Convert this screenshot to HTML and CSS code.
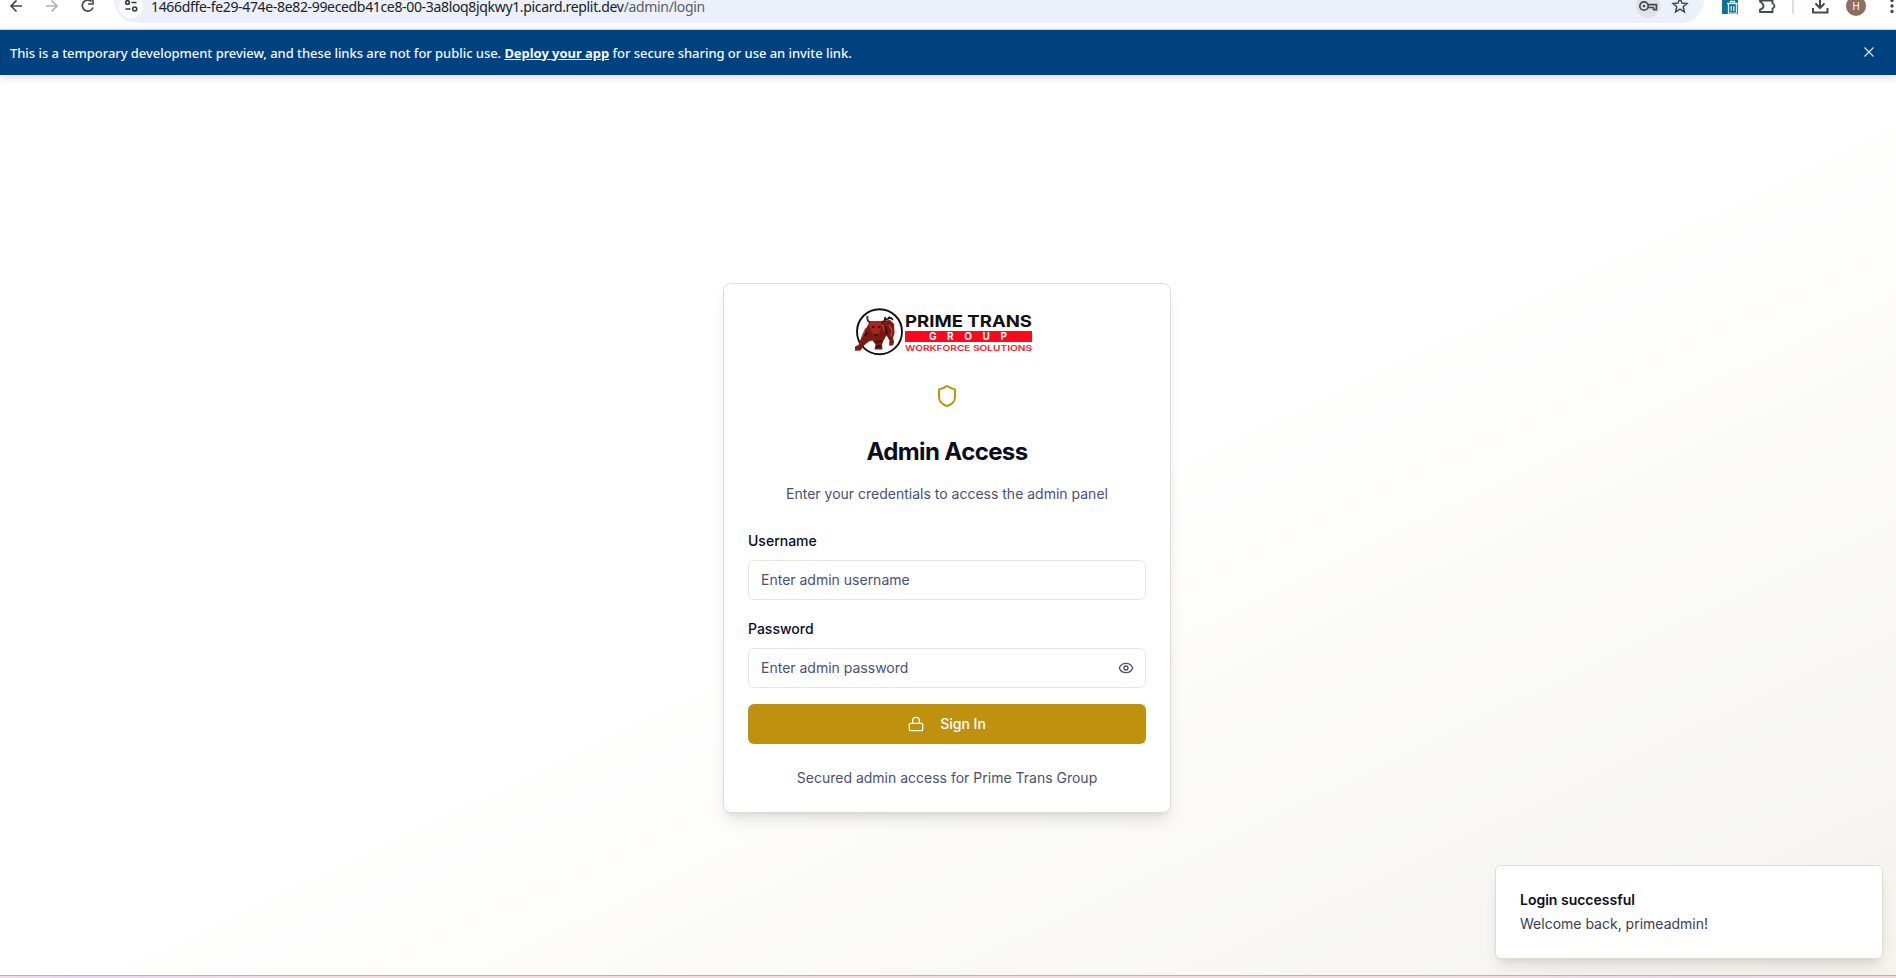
FILE: index.html
```html
<!DOCTYPE html>
<html lang="en">
<head>
<meta charset="utf-8">
<title>Admin Access</title>
<link rel="stylesheet" href="styles.css">
</head>
<body>
<header class="toolbar">
  <svg class="nav-icons" width="114" height="29" viewBox="0 0 114 29" fill="none" stroke="#46484b" stroke-width="1.7">
    <path d="M22 6H11M16.500 0.500L11 6l5.500 5.500"/>
    <path d="M46 6H57M51.500 0.500L57 6l-5.500 5.500" stroke="#aeb0b3"/>
    <path d="M91.500 1.500A5.500 5.500 0 1 0 93 7.500M93 -1v5h-5"/>
  </svg>
  <div class="address">
    <span class="site-info">
      <svg width="24" height="24" viewBox="0 0 24 24" fill="none" stroke="#333538" stroke-width="1.6"><circle cx="8.500" cy="8.500" r="1.800"/><path d="M12.500 8.500h5M6.500 15h5"/><circle cx="15.700" cy="15" r="2"/></svg>
    </span>
    <span class="url">1466dffe-fe29-474e-8e82-99ecedb41ce8-00-3a8loq8jqkwy1.picard.replit.dev<span class="url-path">/admin/login</span></span>
    <svg class="address-icons" width="68" height="23" viewBox="0 0 68 23" fill="none" stroke="#46484b" stroke-width="1.7">
      <circle cx="12" cy="6" r="12" fill="#dfe2e8" stroke="none"/>
      <circle cx="8" cy="6" r="4.200"/><circle cx="8" cy="6" r="1.300" fill="#46484b" stroke="none"/><path d="M12 4.700h8.500v5h-3V7.500H12"/>
      <path d="M44 -1.500l2 4.600 5 .4-3.800 3.300 1.200 5-4.400-2.700-4.400 2.700 1.200-5L37 3.500l5-.4z" stroke-width="1.500"/>
    </svg>
  </div>
  <svg class="ext-icons" width="180" height="29" viewBox="0 0 180 29" fill="none" stroke="#46484b" stroke-width="1.800">
    <path d="M6 0h16v14H6z" fill="#0b7391" stroke="none"/>
    <path d="M11 3.500h11M14.500 3V1.500h4V3M12.500 4v9.200h8V4M15.200 6v5M17.800 6v5" stroke="#dcebf0" stroke-width="1.300"/>
    <path d="M44 -2v3.500q3.500 2 3.500 4.500T44 9.500V12h12.500V8.500q2-.5 2-2.500t-2-2.500V0.500H44"/>
    <path d="M77 0v14" stroke="#cfdffa" stroke-width="2"/>
    <path d="M104 -2v9M99.500 3.500l4.500 4.500 4.500-4.500M97 8v4.500h14.500V8" stroke-width="2"/>
    <circle cx="140" cy="6" r="10" fill="#8d6e63" stroke="none"/>
    <text class="avatar" x="140" y="10" text-anchor="middle">H</text>
    <g fill="#46484b" stroke="none"><circle cx="176" cy="0.500" r="1.700"/><circle cx="176" cy="6" r="1.700"/><circle cx="176" cy="11.500" r="1.700"/></g>
  </svg>
</header>
<div class="banner">
  <p>This is a temporary development preview, and these links are not for public use. <a>Deploy your app</a> for secure sharing or use an invite link.</p>
  <svg width="10" height="10" viewBox="0 0 10 10" stroke="#d5e0eb" stroke-width="1.300"><path d="M.5 .5l9 9M9.500 .5l-9 9"/></svg>
</div>
<main class="page">
  <section class="card">
    <svg class="logo" width="180" height="48" viewBox="0 0 180 48">
      <circle cx="24.500" cy="23.700" r="22.500" fill="#fff" stroke="#111" stroke-width="1.900"/>
      <path d="M14 15l4-2h7l10-1 4 4 .5 9-1.500 5 1 4-1 3.500h-4l.5-5-3-5-3 5-1.500 4 .5 5h-8l1-5-3-4-3 .5-5 4-4 5.500-8 .5 1.500-4 4.500-2 3-8z" fill="#7c1912"/>
      <path d="M15.500 13h11l1 4-3 7-2 4h-4l-2-5-3-6z" fill="#a3291f"/>
      <path d="M12.500 8q-1 5 3 6.500M30 9q1 5-4 6" fill="none" stroke="#5b1a17" stroke-width="1.900"/>
      <path d="M29 12l7-2 2 2M33 10l2-1" fill="none" stroke="#1c0f0e" stroke-width="1.700"/>
      <path d="M17 18.500l2.500 1M25.500 18.500l-2.500 1M19 27h4M30 19l2 7M12 24l-2 4M21 34l6-1M21 39l5-1" fill="none" stroke="#260b09" stroke-width="1.700"/>
      <path d="M34 17l3 5-1 6M11 20l-4 9M28 17l1 6" fill="none" stroke="#c2382b" stroke-width="1.500"/>
      <text class="brand" x="50" y="19" textLength="127" lengthAdjust="spacingAndGlyphs">PRIME TRANS</text>
      <path d="M50 23h127v11H50z" fill="#ff071d"/>
      <text class="group" x="74" y="32" textLength="78" lengthAdjust="spacing">GROUP</text>
      <text class="tagline" x="50" y="43" textLength="127" lengthAdjust="spacingAndGlyphs">WORKFORCE SOLUTIONS</text>
    </svg>
    <svg class="shield" width="24" height="24" viewBox="0 0 24 24" fill="none" stroke="#be920f" stroke-width="2" stroke-linecap="round" stroke-linejoin="round"><path d="M20 13c0 5-3.500 7.500-7.660 8.950a1 1 0 0 1-.67-.01C7.500 20.500 4 18 4 13V6a1 1 0 0 1 1-1c2 0 4.500-1.200 6.240-2.720a1.170 1.170 0 0 1 1.520 0C14.510 3.810 17 5 19 5a1 1 0 0 1 1 1z"/></svg>
    <h1>Admin Access</h1>
    <p class="lead">Enter your credentials to access the admin panel</p>
    <form class="form">
      <label>Username</label>
      <div class="field">Enter admin username</div>
      <label>Password</label>
      <div class="field">Enter admin password
        <svg width="16" height="16" viewBox="0 0 24 24" fill="none" stroke="#4a5072" stroke-width="2" stroke-linecap="round" stroke-linejoin="round"><path d="M2.060 12.350a1 1 0 0 1 0-.7 10.750 10.750 0 0 1 19.880 0 1 1 0 0 1 0 .7 10.750 10.750 0 0 1-19.880 0"/><circle cx="12" cy="12" r="3"/></svg>
      </div>
      <button type="button" class="submit">
        <svg width="16" height="16" viewBox="0 0 24 24" fill="none" stroke="#fff" stroke-width="2" stroke-linecap="round" stroke-linejoin="round"><rect x="2" y="11" width="20" height="11" rx="2"/><path d="M7 11V7a5 5 0 0 1 10 0v4"/></svg>
        Sign In
      </button>
    </form>
    <p class="note">Secured admin access for Prime Trans Group</p>
  </section>
  <aside class="toast"><strong>Login successful</strong><span>Welcome back, primeadmin!</span></aside>
</main>
<div class="bottom-strip"></div>
</body>
</html>
```
FILE: styles.css
```css
* { box-sizing: border-box; }
body { margin: 0; height: 978px; overflow: hidden; display: flex; flex-direction: column; font: 14px/20px Inter, sans-serif; color: #0a0d1f; background: #fff; }
p, h1 { margin: 0; }
svg { flex: none; display: block; }

.toolbar { height: 30px; flex: none; display: flex; align-items: flex-start; border-bottom: 1px solid #d8dfe6; }
.address { width: 1590px; height: 23px; flex: none; display: flex; align-items: flex-start; background: #ebf0fa; border-radius: 0 0 23px 23px; }
.site-info { width: 24px; height: 24px; margin: -6px 0 0 5px; background: #fff; border-radius: 50%; }
.url { margin: 0 auto 0 8px; font: 14px/13px "Noto Sans", sans-serif; white-space: nowrap; color: #202124; letter-spacing: -0.335px; }
.url-path { color: #5b5e63; }
.ext-icons { margin-left: 12px; }
.avatar { font: 10px Roboto, sans-serif; fill: #fff; stroke: none; }

.banner { height: 45px; flex: none; display: flex; align-items: center; justify-content: space-between; padding: 0 22px 2px 10px; background: #00417f; color: #f5f9fc; box-shadow: 0 2px 10px rgba(0,0,0,.15); z-index: 1; font: 500 13px/20px "Noto Sans", sans-serif; letter-spacing: -0.05px; }
.banner p { padding-top: 2px; }
.banner a { font-weight: 700; text-decoration: underline; }

.page { flex: 1; display: flex; flex-direction: column; align-items: center; padding-top: 208px; background: linear-gradient(to bottom right, #fff 0%, #fff 50%, #f4f3ee 100%); }
.card { width: 448px; height: 530px; margin-right: 2px; padding: 24px; display: flex; flex-direction: column; align-items: center; border: 1px solid #deded0; border-radius: 8px; background: #fff; box-shadow: 0 10px 15px -3px rgba(0,0,0,.1), 0 4px 6px -4px rgba(0,0,0,.1); }
.logo { margin-right: 4px; }
.brand { font: 700 16.5px Inter, sans-serif; fill: #111; }
.group { font: 700 10px Inter, sans-serif; fill: #fff; }
.tagline { font: 600 7.5px Inter, sans-serif; fill: #f01d31; }
.shield { margin-top: 28px; }
h1 { margin-top: 28px; font-size: 24px; line-height: 32px; font-weight: 700; letter-spacing: -0.6px; }
.lead { margin-top: 16px; color: #4a5072; }
.form { width: 100%; margin-top: 27px; display: flex; flex-direction: column; }
.form label { font-weight: 500; line-height: 20px; margin-bottom: 9px; }
.field { height: 40px; display: flex; align-items: center; justify-content: space-between; padding: 0 11px 0 12px; margin-bottom: 19px; border: 1px solid #e8e7de; border-radius: 6px; color: #4a5072; }
.submit { height: 40px; margin-top: -3px; display: flex; align-items: center; justify-content: center; gap: 16px; border: 0; border-radius: 6px; background: #be920f; color: #fff; font: 500 14px/20px Inter, sans-serif; }
.note { margin-top: 24px; color: #4a5072; }

.toast { width: 388px; height: 94px; flex: none; align-self: flex-end; margin: 52px 13px 0 0; padding: 24px; display: flex; flex-direction: column; gap: 4px; border: 1px solid #deded0; border-radius: 6px; background: #fff; box-shadow: 0 10px 15px -3px rgba(0,0,0,.1), 0 4px 6px -4px rgba(0,0,0,.1); }
.toast strong { font-weight: 600; }
.toast span { color: #3a3d4c; }
.bottom-strip { height: 3px; flex: none; border-top: 1px solid #bdb0b5; background: linear-gradient(90deg, #f0dde8, #e8d8f0 4%, #f3dce2 15%, #f3dce2 80%, #ebd8e8 90%, #f5dadd); }
```
